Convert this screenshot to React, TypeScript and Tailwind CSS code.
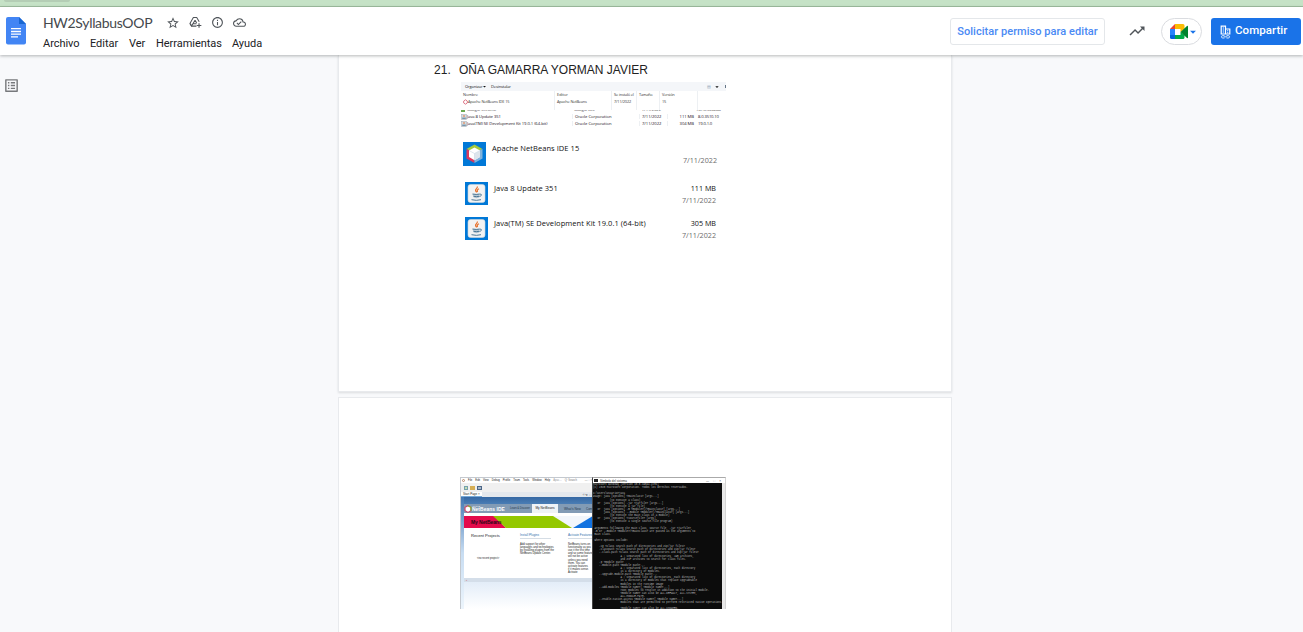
import React from "react";
import {
  MdStarBorder,
  MdInfoOutline,
  MdOutlineCloudDone,
  MdTrendingUp,
  MdOutlineListAlt,
  MdArrowDropDown,
} from "react-icons/md";

const menus = [
  { label: "Archivo", box: "w-[47px]" },
  { label: "Editar", box: "w-[39px]" },
  { label: "Ver", box: "w-[27px]" },
  { label: "Herramientas", box: "w-[76px]" },
  { label: "Ayuda", box: "w-[40px]" },
];

function DocsLogo() {
  return (
    <svg width="20" height="28" viewBox="0 0 20 28" className="block">
      <path d="M2 0h11l7 7v18.500a2 2 0 0 1-2 2H2a2 2 0 0 1-2-2V2a2 2 0 0 1 2-2z" fill="#4285f4" />
      <path d="M13 0l7 7h-7z" fill="#1967d2" />
      <path d="M5 11.700h10M5 14.500h10M5 17.200h10M5 19.900h7" stroke="#fff" strokeWidth="1.300" />
    </svg>
  );
}

function DriveAddIcon() {
  return (
    <svg width="13" height="13" viewBox="0 0 14 13" className="block" fill="none" stroke="currentColor" strokeWidth="1.100" strokeLinejoin="round">
      <path d="M8 10.400H2.800L1 7.600 4.700 1.200h3.600L11 5.800" />
      <path d="M6.500 4L4.200 7.900h3.900M6.500 4l1.700 2.900M1.200 7.700l1.600 2.600 1.400-2.400" />
      <path d="M10.800 7.200v5M8.300 9.700h5" strokeWidth="1.200" />
    </svg>
  );
}

function MeetLogo() {
  return (
    <svg width="18" height="16" viewBox="0 0 18 16" className="block shrink-0">
      <path d="M0 5L5 0v5z" fill="#ea4335" />
      <path d="M5 0h8a1.500 1.500 0 0 1 1.500 1.500V5L10.500 8V5H5z" fill="#fbbc04" />
      <path d="M0 5h5v6H0z" fill="#2684fc" />
      <path d="M0 11h5v4H1.500A1.500 1.500 0 0 1 0 13.500z" fill="#0066da" />
      <path d="M5 11h5.500V8l4 3v2.500A1.500 1.500 0 0 1 13 15H5z" fill="#00ac47" />
      <path d="M10.500 8L17 2q1-.5 1 .5v11q0 1-1 .5z" fill="#00832d" />
    </svg>
  );
}

function ShareIcon() {
  return (
    <svg width="11" height="14" viewBox="0 0 11 14" className="block shrink-0" fill="none" stroke="#fff">
      <path d="M1.200 9V1.200h4.300V9M5.500 4h4.300v5M.6 9h9.800" strokeWidth="1.200" />
      <path d="M3.350 2.400v6M7.700 5.200v3.500" strokeWidth="1.200" strokeDasharray="1.100 .9" />
      <path d="M4.500 13H2.700a1.200 1.200 0 0 1 0-2.400h1.800M6.500 10.600h1.800a1.200 1.200 0 0 1 0 2.400H6.500M3.700 11.800h3.600" strokeWidth=".8" />
    </svg>
  );
}

function Header() {
  return (
    <header className="relative z-10 flex h-[48px] shrink-0 bg-white shadow-[0_1px_3px_rgba(60,64,67,0.38)]">
      <div className="w-[43px] shrink-0 pt-[10px] pl-[6px]">
        <DocsLogo />
      </div>
      <div className="flex flex-col">
        <div className="flex h-[31px] items-center pb-px">
          <div className="w-[123px] whitespace-nowrap pt-px font-['Lato',sans-serif] text-[14px] leading-5 tracking-[-0.320px] text-[#45494d]">
            HW2SyllabusOOP
          </div>
          <div className="flex items-center gap-[9px] pt-px text-[#50555a]">
            <MdStarBorder size={14} />
            <DriveAddIcon />
            <MdInfoOutline size={13} />
            <MdOutlineCloudDone size={13} />
          </div>
        </div>
        <nav className="flex font-['Roboto',sans-serif] text-[11px] leading-3 tracking-[-0.040px] text-[#202124]">
          {menus.map((m) => (
            <div key={m.label} className={m.box}>
              {m.label}
            </div>
          ))}
        </nav>
      </div>
      <div className="ml-auto flex shrink-0 items-start pt-[11px] pr-[2px]">
        <button className="flex h-[27px] w-[155px] items-center justify-center whitespace-nowrap rounded-[3px] border border-[#e4e7ea] pt-px font-['Roboto',sans-serif] text-[11px] font-medium tracking-[0.050px] text-[#4a8af4]">
          Solicitar permiso para editar
        </button>
        <div className="ml-[23px] pt-[4px] text-[#50555a]">
          <MdTrendingUp size={18} />
        </div>
        <button className="ml-[15px] flex h-[27px] w-[41px] items-center rounded-full border border-[#dadce0] pl-[8px]">
          <MeetLogo />
          <MdArrowDropDown size={14} className="-ml-[2px] shrink-0 text-[#1a73e8]" />
        </button>
        <button className="ml-[9px] flex h-[27px] w-[90px] items-center rounded-[3px] bg-[#1a73e8] pl-[9px] font-['Roboto',sans-serif] text-[11.500px] font-medium tracking-[0.060px] text-white">
          <ShareIcon />
          <span className="pb-px pl-[4px]">Compartir</span>
        </button>
      </div>
    </header>
  );
}

function CubeIcon() {
  return (
    <svg width="23" height="24" viewBox="0 0 23 24" className="block shrink-0">
      <rect width="23" height="24" fill="#0078d7" />
      <path d="M11.500 2.500L19.500 7l-8 4-8-4z" fill="#a5c93d" />
      <path d="M3.500 7v9.500l8 4.500v-10z" fill="#d9395f" />
      <path d="M19.500 7v9.500l-8 4.500v-10z" fill="#7fb2dc" />
      <path d="M11.500 5.500l5.500 3v6.500l-5.500 3.200L6 15V8.500z" fill="#fff" />
      <path d="M11.500 11.500l5.500-3v6.500l-5.500 3.200z" fill="#dde5ec" />
      <path d="M6 8.500l5.500 3 5.500-3M11.500 11.500v6.500" stroke="#cfdbe6" strokeWidth=".7" fill="none" />
    </svg>
  );
}

function JavaIcon() {
  return (
    <svg width="23" height="23" viewBox="0 0 23 23" className="block shrink-0">
      <rect width="23" height="23" fill="#0078d7" />
      <rect x="3" y="2.500" width="17" height="18" rx="2.500" fill="#f3f3f3" stroke="#cfd6dc" strokeWidth=".6" />
      <path d="M12 4.500c1.500 1.800-2.300 2.600-1.400 4.300.4.800.9 1 1 1.700M14 6.800c-1.800.8-2.200 1.700-1.400 3.300" stroke="#e8702a" strokeWidth="1.200" fill="none" />
      <path d="M7.500 12h7.300l-.6 3.500q-2.500 1.300-5.500 0z" fill="#b9c9d4" />
      <path d="M7.500 12q3.800.9 7.300 0M8.500 14.300q3 .7 5.700 0M6.500 17.700q5 1.300 9.500 0M15 12.200c2.200-.4 1.800 1.800-.5 2.300" stroke="#4d7896" strokeWidth="1" fill="none" />
    </svg>
  );
}

function MiniIcon() {
  return (
    <svg width="6" height="6" viewBox="0 0 6 6" className="block shrink-0">
      <rect x=".3" y=".3" width="5.400" height="5.400" fill="#d5dbe1" stroke="#a5adb5" strokeWidth=".5" />
      <path d="M3 1v2" stroke="#e8702a" strokeWidth=".9" />
      <path d="M1.200 4.200h3.600" stroke="#4d7896" strokeWidth="1" />
    </svg>
  );
}

function ProgramsTable() {
  return (
    <div className="h-[46px] w-[265px] overflow-hidden whitespace-nowrap font-['Open_Sans',sans-serif] text-[4px] leading-[5px] text-[#333]">
      <div className="flex h-[9px] items-center bg-[#f4f6f9] pl-[4px] font-medium text-[#111]">
        <span className="w-[16px] tracking-[-0.100px]">Organizar</span>
        <MdArrowDropDown size={7} className="mr-[3px]" />
        <span className="tracking-[-0.100px]">Desinstalar</span>
        <span className="ml-auto text-[#8aa0b4]">▤</span>
        <MdArrowDropDown size={8} className="ml-[2px] mr-[4px]" />
        <span className="h-[3px] w-px bg-[#678]" />
      </div>
      <div className="flex h-[19px] leading-[7px] text-[3.900px]">
        <div className="w-[94px] border-r border-[#edf0f3] pl-[2px]">
          <div>Nombre</div>
          <div className="flex items-center">
            <svg width="5" height="6" viewBox="0 0 5 6"><path d="M2.500.8L4.300 2v2L2.500 5.200.7 4V2z" fill="#fff" stroke="#d65b70" strokeWidth=".8" /></svg>
            <span className="tracking-[-0.150px]">Apache NetBeans IDE 15</span>
          </div>
        </div>
        <div className="w-[57px] border-r border-[#edf0f3] pl-[2px]"><div>Editor</div><div className="tracking-[-0.150px]">Apache NetBeans</div></div>
        <div className="w-[25px] border-r border-[#edf0f3] pl-[2px] tracking-[-0.150px]"><div>Se instaló el</div><div>7/11/2022</div></div>
        <div className="w-[23px] border-r border-[#edf0f3] pl-[2px] tracking-[-0.250px]">Tamaño</div>
        <div className="w-[38px] border-r border-[#edf0f3] pl-[2px] tracking-[-0.150px]"><div>Versión</div><div>15</div></div>
      </div>
      <div className="flex h-[3px] items-start overflow-hidden">
        <div className="mt-[-3px] flex w-full text-[#333]">
          <span className="mt-[3px] h-[2px] w-[4px] bg-[#6aa84f]" />
          <span className="w-[109px] pl-[2px]">Google Chrome</span>
          <span className="w-[68px]">Google LLC</span>
          <span className="w-[54px]">7/11/2022</span>
          <span className="tracking-[-0.100px]">107.0.5304.88</span>
        </div>
      </div>
      {[
        ["Java 8 Update 351", "111 MB", "8.0.3510.10"],
        ["Java(TM) SE Development Kit 19.0.1 (64-bit)", "304 MB", "19.0.1.0"],
      ].map(([name, size, version]) => (
        <div key={name} className="flex h-[7px] items-center text-[4.200px] font-medium text-[#1b1023]">
          <MiniIcon />
          <span className="w-[105px] tracking-[-0.070px]">{name}</span>
          <span className="w-[67px] border-l border-[#edf0f3] pl-[2px] tracking-[-0.050px]">Oracle Corporation</span>
          <span className="w-[28px] border-l border-[#edf0f3] pl-[2px] tracking-[-0.050px]">7/11/2022</span>
          <span className="w-[27px] border-l border-[#edf0f3] text-right tracking-[-0.050px]">{size}</span>
          <span className="pl-[4px] tracking-[-0.150px]">{version}</span>
        </div>
      ))}
    </div>
  );
}

function AppRow({ icon, name, size, box }: { icon: React.ReactNode; name: string; size: string; box: string }) {
  return (
    <div className={"flex font-['Open_Sans',sans-serif] text-[7.200px] leading-[12px] text-[#111] " + box}>
      {icon}
      <div className="whitespace-nowrap pl-[6px] text-[7.500px] tracking-[0.060px]">{name}</div>
      <div className="ml-auto whitespace-nowrap text-right">
        <div className="h-[12px] font-medium">{size}</div>
        <div className="text-[#6c6c6c]">7/11/2022</div>
      </div>
    </div>
  );
}

function NetBeansWindow() {
  return (
    <div className="flex h-[132px] w-[132px] shrink-0 flex-col overflow-hidden whitespace-nowrap border-l border-t border-[#c4c9cf] bg-[#f4f7fb] font-['Liberation_Sans',sans-serif] text-[3px] leading-[4px] text-[#222]">
      <div className="flex h-[5px] shrink-0 items-center gap-[3px] bg-white pl-px text-[2.700px]">
        <span className="h-[3px] w-[3px] shrink-0 rounded-full border border-[#b86]" />
        <span>File</span><span>Edit</span><span>View</span><span>Debug</span><span>Profile</span><span>Team</span><span>Tools</span><span>Window</span><span>Help</span>
        <span className="text-[#999]">Apac...</span>
        <span className="text-[#777]">Q· Search</span>
        <span className="ml-auto text-[#777]">— □ ×</span>
      </div>
      <div className="flex h-[9px] shrink-0 items-center gap-[2px] bg-[#f0f0f0] pl-[3px]">
        <span className="h-[4px] w-[4px] border border-[#76a1ac] bg-[#c4ddb4]" />
        <span className="h-[4px] w-[5px] bg-[#d6ae54]" />
        <span className="h-[4px] w-[5px] border border-[#4b6687] bg-[#a6b6c9]" />
      </div>
      <div className="flex h-[5px] shrink-0 items-center justify-between bg-[#e4e8ed] pr-px">
        <span className="h-full border-b border-[#76a9d8] bg-white px-[2px]">Start Page ×</span>
        <span>‹ › ▾ □</span>
      </div>
      <div className="flex min-h-0 flex-1">
        <div className="w-[3px] shrink-0 bg-linear-to-b from-[#4378b2] via-[#c8ddf2] to-[#edf5fc]" />
        <div className="flex min-w-0 flex-1 flex-col">
          <div className="h-[7px] shrink-0 bg-linear-to-b from-[#3568a4] to-[#4a7db4]" />
          <div className="flex h-[9px] shrink-0 items-center bg-[#829bb5]">
            <svg width="8" height="8" viewBox="0 0 8 8" className="shrink-0">
              <path d="M4 .7L7 2.300v3.400L4 7.400 1 5.700V2.300z" fill="#fff" stroke="#c94669" strokeWidth="1.200" />
              <path d="M4 .7L7 2.300v3.400" fill="none" stroke="#80b52a" strokeWidth="1.200" />
            </svg>
            <div className="w-[38px] shrink-0 font-bold text-white">
              <div className="h-[2px] text-[2px] font-normal leading-[2px]">APACHE</div>
              <div className="text-[4.900px] leading-[5px] tracking-[0.060px]">NetBeans IDE</div>
            </div>
            <span className="w-[22px] shrink-0 text-[2.700px] tracking-[-0.050px] text-[#26394e]">Learn &amp; Discover</span>
            <span className="h-full w-[26px] shrink-0 bg-[#eff3f7] text-center text-[3.200px] leading-[9px] text-[#222]">My NetBeans</span>
            <span className="w-[28px] shrink-0 pl-[6px] text-[3.200px] text-[#26394e]">What's New</span>
            <span className="text-[3px] text-[#26394e]">Com</span>
          </div>
          <div className="h-[3px] shrink-0 bg-white" />
          <div className="relative h-[12px] shrink-0 overflow-hidden">
            <svg width="129" height="12" viewBox="0 0 129 12" className="block">
              <rect width="129" height="12" fill="#f2f6fb" />
              <path d="M0 0h30l12 12H0z" fill="#e40b4b" />
              <path d="M29 0h60l19 12H42z" fill="#94c800" />
              <path d="M129 0v12h-20z" fill="#1272e0" />
            </svg>
            <span className="absolute left-[7px] top-[3px] text-[5px] font-bold leading-[7px] tracking-[-0.080px] text-[#2a0715]">My NetBeans</span>
          </div>
          <div className="flex h-[50px] shrink-0 bg-white pt-[6px] leading-[3.100px]">
            <div className="w-[56px] shrink-0 pl-[7px]">
              <div className="text-[4.100px]">Recent Projects</div>
              <div className="pl-[6px] pt-[20px] text-[2.600px]">&lt;no recent project&gt;</div>
            </div>
            <div className="w-[48px] shrink-0">
              <div className="w-[31px] border-b border-[#d5dde5] pb-px text-[3.100px] text-[#3471ad]">Install Plugins</div>
              <div className="pt-[4px] text-[2.700px]">Add support for other<br />languages and technologies<br />by installing plugins from the<br />NetBeans Update Center.</div>
            </div>
            <div className="shrink-0">
              <div className="w-[25px] border-b border-[#d5dde5] pb-px text-[3.100px] text-[#3471ad]">Activate Features</div>
              <div className="pt-[4px] text-[2.700px]">NetBeans turns on<br />functionality as you<br />use it the first time<br />and so some features<br />will not be active<br />unless you need<br />them. You can<br />activate features<br />if it makes sense.<br />Activate</div>
            </div>
          </div>
          <div className="h-[4px] shrink-0 bg-[#d4dee9] pl-[2px] text-[#ca5a62]">▪</div>
          <div className="flex-1 bg-linear-to-b from-[#e3edf8] to-white" />
        </div>
      </div>
    </div>
  );
}

const consoleText = `Microsoft Windows [Versión 10.0.19044.2251]
(c) 2020 Microsoft Corporation. Todos los derechos reservados.

C:\\Users\\Usuario>java
Usage: java [options] <mainclass> [args...]
           (to execute a class)
   or  java [options] -jar <jarfile> [args...]
           (to execute a jar file)
   or  java [options] -m <module>[/<mainclass>] [args...]
       java [options] --module <module>[/<mainclass>] [args...]
           (to execute the main class in a module)
   or  java [options] <sourcefile> [args]
           (to execute a single source-file program)

 Arguments following the main class, source file, -jar <jarfile>,
 -m or --module <module>/<mainclass> are passed as the arguments to
 main class.

 where options include:

    -cp <class search path of directories and zip/jar files>
    -classpath <class search path of directories and zip/jar files>
    --class-path <class search path of directories and zip/jar files>
                  A ; separated list of directories, JAR archives,
                  and ZIP archives to search for class files.
    -p <module path>
    --module-path <module path>...
                  A ; separated list of directories, each directory
                  is a directory of modules.
    --upgrade-module-path <module path>...
                  A ; separated list of directories, each directory
                  is a directory of modules that replace upgradeable
                  modules in the runtime image
    --add-modules <module name>[,<module name>...]
                  root modules to resolve in addition to the initial module.
                  <module name> can also be ALL-DEFAULT, ALL-SYSTEM,
                  ALL-MODULE-PATH.
    --enable-native-access <module name>[,<module name>...]
                  modules that are permitted to perform restricted native operations.

                  <module name> can also be ALL-UNNAMED.`;

function ConsoleWindow() {
  return (
    <div className="flex h-[132px] w-[134px] shrink-0 flex-col overflow-hidden border-x border-t border-r-[#d4d4d4] border-l-[#444] border-t-[#aaa] bg-[#0c0c0c]">
      <div className="flex h-[5px] shrink-0 items-center bg-white pl-px font-['Liberation_Sans',sans-serif] text-[3px] leading-[4px] text-[#333]">
        <span className="mr-[2px] h-[3px] w-[4px] bg-[#222]" />
        <span>Símbolo del sistema</span>
        <span className="ml-auto whitespace-pre pr-[4px]">—     □     ×</span>
      </div>
      <div className="flex min-h-0 flex-1">
        <pre className="min-w-0 flex-1 overflow-hidden font-['Liberation_Mono',monospace] text-[2.560px] leading-[3.110px] text-[#bdbdbd]">{consoleText}</pre>
        <div className="w-[3px] shrink-0 bg-[#e8e8e8]" />
      </div>
    </div>
  );
}

export default function App() {
  return (
    <div className="flex h-[632px] w-[1303px] flex-col overflow-hidden bg-[#f8f9fb]">
      <div className="h-[7px] shrink-0 border-b border-[#9ebd9e] bg-[#c5e2c6]">
        <div className="ml-[4px] h-[2px] w-[66px] rounded-b-[3px] bg-[#b4cdb5]" />
      </div>
      <Header />
      <div className="flex min-h-0 flex-1">
        <aside className="w-[338px] shrink-0 pt-[22px] pl-[3px] text-[#77797c]">
          <MdOutlineListAlt size={17} />
        </aside>
        <main className="w-[614px] shrink-0">
          <section className="h-[337px] border border-t-0 border-[#e8eaed] bg-white shadow-[0_1px_2px_rgba(60,64,67,0.15)]">
            <div className="flex pt-[7px] pl-[95px] font-['Liberation_Sans',sans-serif] text-[12px] leading-[16px] text-[#222]">
              <span className="w-[25px] tracking-[0.100px]">21.</span>
              <span className="whitespace-nowrap">OÑA GAMARRA YORMAN JAVIER</span>
            </div>
            <div className="pt-[4px] pl-[122px]">
              <ProgramsTable />
            </div>
            <div className="pl-[124px] pt-[14px]">
              <AppRow icon={<CubeIcon />} name="Apache NetBeans IDE 15" size="" box="h-[40px] w-[254px]" />
              <AppRow icon={<JavaIcon />} name="Java 8 Update 351" size="111 MB" box="ml-[2px] h-[35px] w-[251px]" />
              <AppRow icon={<JavaIcon />} name="Java(TM) SE Development Kit 19.0.1 (64-bit)" size="305 MB" box="ml-[2px] h-[24px] w-[251px]" />
            </div>
          </section>
          <section className="mt-[5px] h-[240px] border border-[#e8eaed] bg-white">
            <div className="flex pt-[79px] pl-[121px]">
              <NetBeansWindow />
              <ConsoleWindow />
            </div>
          </section>
        </main>
      </div>
    </div>
  );
}
